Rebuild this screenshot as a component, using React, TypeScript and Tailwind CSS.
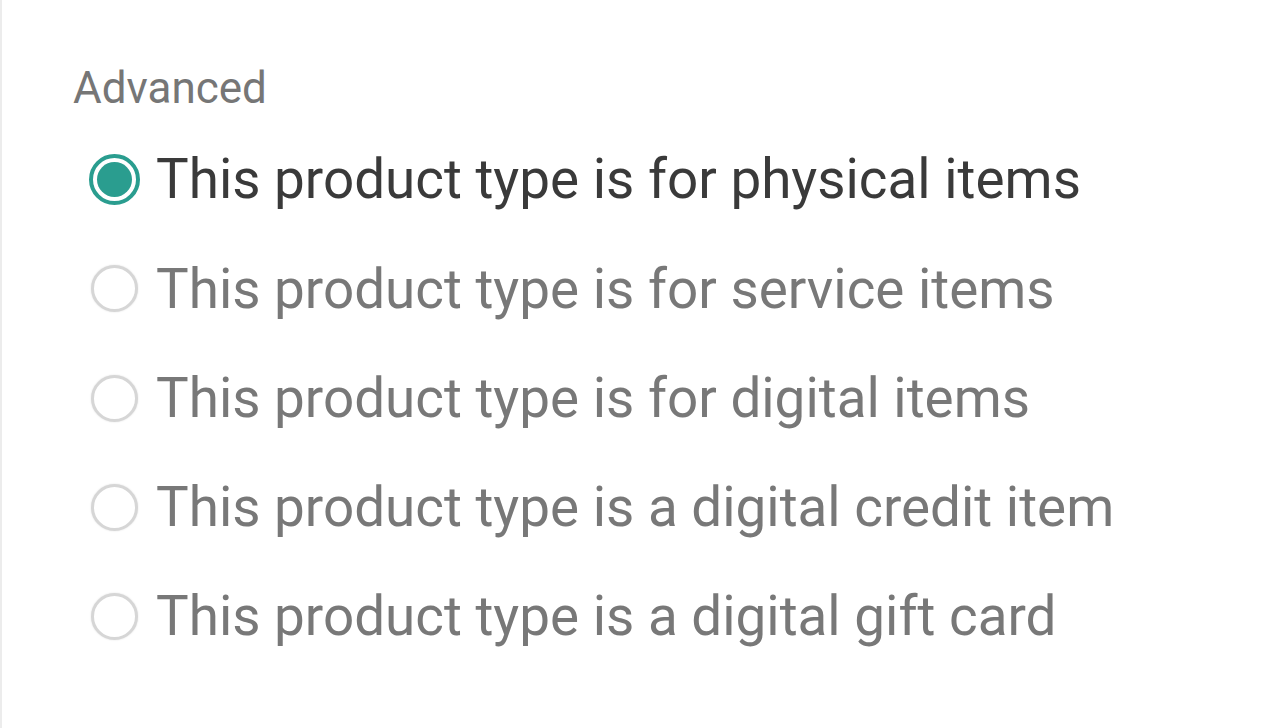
import React, { useState } from 'react';

const options = [
  'This product type is for physical items',
  'This product type is for service items',
  'This product type is for digital items',
  'This product type is a digital credit item',
  'This product type is a digital gift card',
];

const Radio = ({ checked }: { checked: boolean }) =>
  checked ? (
    <span className="flex h-[51px] w-[51px] shrink-0 items-center justify-center rounded-full border-[4px] border-[#2a9d8f] bg-white">
      <span className="h-[35px] w-[35px] rounded-full bg-[#2a9d8f]" />
    </span>
  ) : (
    <span className="block h-[47px] w-[47px] shrink-0 rounded-full border-[3px] border-[#d6d6d6] bg-white shadow-[0_0_2px_rgba(0,0,0,0.12)]" />
  );

export default function App() {
  const [selected, setSelected] = useState(0);

  return (
    <div
      className="h-[728px] w-full border-l-2 border-[#ececec] bg-white"
      style={{ fontFamily: 'Roboto, "Liberation Sans", sans-serif' }}
    >
      <div className="pl-[71px] pt-[63px]">
        <h3 className="text-[44px] font-normal leading-[50px] text-[#767676]">Advanced</h3>
        <div className="mt-[12px] flex flex-col pl-[16px]">
          {options.map((label, i) => (
            <label
              key={label}
              onClick={() => setSelected(i)}
              className="flex h-[109.3px] cursor-pointer items-center gap-[16px]"
            >
              <div className="flex w-[51px] justify-center">
                <Radio checked={selected === i} />
              </div>
              <span
                className={`text-[54.8px] leading-none ${
                  selected === i ? 'text-[#3a3a3a]' : 'text-[#787878]'
                }`}
              >
                {label}
              </span>
            </label>
          ))}
        </div>
      </div>
    </div>
  );
}
